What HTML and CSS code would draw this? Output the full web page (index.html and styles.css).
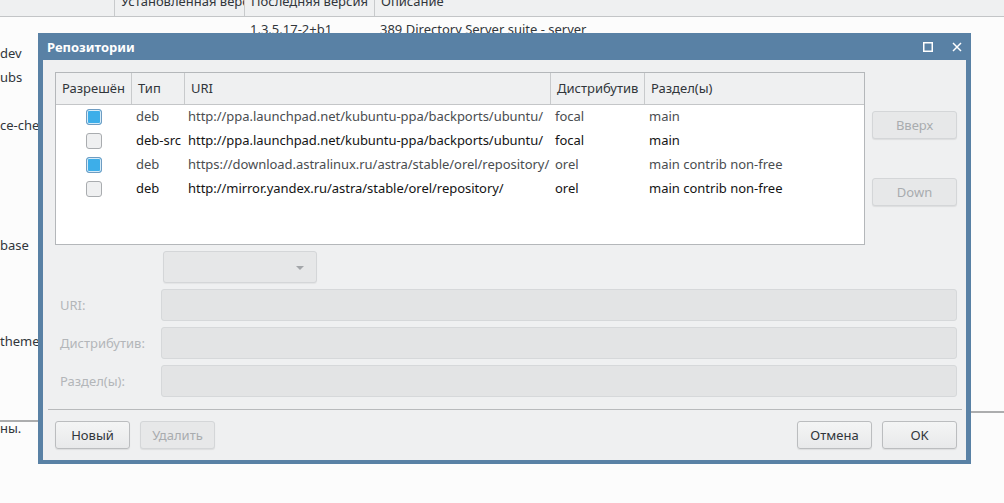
FILE: index.html
```html
<!DOCTYPE html>
<html lang="ru">
<head>
  <meta charset="UTF-8" />
  <meta name="viewport" content="width=device-width, initial-scale=1.0" />
  <title>Репозитории</title>
  <link rel="stylesheet" href="styles.css">
</head>
<body>
  <!-- окно менеджера пакетов под диалогом -->
  <div class="app">
    <div class="pkg-head">
      <div class="col col-name"></div>
      <div class="col col-inst"><span>Установленная версия</span></div>
      <div class="col col-last"><span>Последняя версия</span></div>
      <div class="col col-desc"><span>Описание</span></div>
    </div>
    <div class="pkg-list">
      <div class="pkg-row"><div class="col col-name"></div><div class="col col-inst"></div><div class="col col-last">1.3.5.17-2+b1</div><div class="col col-desc">389 Directory Server suite - server</div></div>
      <div class="pkg-row"><div class="col col-name">dev</div></div>
      <div class="pkg-row"><div class="col col-name">ubs</div></div>
      <div class="pkg-row"></div>
      <div class="pkg-row"><div class="col col-name">ce-check</div></div>
      <div class="pkg-row"></div>
      <div class="pkg-row"></div>
      <div class="pkg-row"></div>
      <div class="pkg-row"></div>
      <div class="pkg-row"><div class="col col-name">base</div></div>
      <div class="pkg-row"></div>
      <div class="pkg-row"></div>
      <div class="pkg-row"></div>
      <div class="pkg-row"><div class="col col-name">theme</div></div>
      <div class="pkg-row"></div>
      <div class="pkg-row"></div>
    </div>
    <div class="status">
      <div class="status-left">ны.</div>
      <div class="status-right"></div>
    </div>
  </div>

  <!-- диалог "Репозитории" -->
  <div class="dialog">
    <div class="titlebar">
      <span class="title">Репозитории</span>
      <div class="tb-buttons">
        <svg width="10" height="10" viewBox="0 0 10 10"><rect x="0.75" y="0.75" width="8.5" height="8.5" fill="none" stroke="#fff" stroke-width="1.5"/></svg>
        <svg width="10" height="10" viewBox="0 0 10 10"><path d="M1 1 L9 9 M9 1 L1 9" stroke="#fff" stroke-width="1.5" fill="none"/></svg>
      </div>
    </div>

    <div class="dialog-body">
      <div class="top">
        <div class="repo-table">
          <div class="tr th">
            <div class="cell">Разрешён</div>
            <div class="cell">Тип</div>
            <div class="cell">URI</div>
            <div class="cell">Дистрибутив</div>
            <div class="cell">Раздел(ы)</div>
          </div>
          <div class="tr on">
            <div class="cell check"><span class="cb checked"></span></div>
            <div class="cell">deb</div>
            <div class="cell uri">http://ppa.launchpad.net/kubuntu-ppa/backports/ubuntu/</div>
            <div class="cell">focal</div>
            <div class="cell">main</div>
          </div>
          <div class="tr off">
            <div class="cell check"><span class="cb"></span></div>
            <div class="cell">deb-src</div>
            <div class="cell uri">http://ppa.launchpad.net/kubuntu-ppa/backports/ubuntu/</div>
            <div class="cell">focal</div>
            <div class="cell">main</div>
          </div>
          <div class="tr on">
            <div class="cell check"><span class="cb checked"></span></div>
            <div class="cell">deb</div>
            <div class="cell uri">https://download.astralinux.ru/astra/stable/orel/repository/</div>
            <div class="cell">orel</div>
            <div class="cell">main contrib non-free</div>
          </div>
          <div class="tr off">
            <div class="cell check"><span class="cb"></span></div>
            <div class="cell">deb</div>
            <div class="cell uri">http://mirror.yandex.ru/astra/stable/orel/repository/</div>
            <div class="cell">orel</div>
            <div class="cell">main contrib non-free</div>
          </div>
        </div>
        <div class="side">
          <button class="btn" disabled>Вверх</button>
          <button class="btn" disabled>Down</button>
        </div>
      </div>

      <div class="combo"><span class="arrow"></span></div>

      <div class="form">
        <label>URI:</label><div class="field"></div>
        <label>Дистрибутив:</label><div class="field"></div>
        <label>Раздел(ы):</label><div class="field"></div>
      </div>

      <div class="sep"></div>

      <div class="buttons">
        <button class="btn">Новый</button>
        <button class="btn" disabled>Удалить</button>
        <span class="spacer"></span>
        <button class="btn">Отмена</button>
        <button class="btn">OK</button>
      </div>
    </div>
  </div>
</body>
</html>
```

FILE: styles.css
```css
* {
  box-sizing: border-box;
}

body {
  margin: 0;
  width: 1004px;
  height: 503px;
  overflow: hidden;
  background: #fcfcfc;
  font-family: "Noto Sans", "Open Sans", sans-serif;
  font-size: 13px;
  color: #31363b;
  position: relative;
}

/* ---------- фон: список пакетов ---------- */

.pkg-head {
  display: flex;
  height: 17px;
  background: #eff0f1;
  border-bottom: 1px solid #c3c5c7;
  overflow: hidden;
}

.pkg-head .col {
  border-right: 1px solid #c8cacc;
  padding-left: 6px;
  line-height: 16px;
  white-space: nowrap;
  overflow: hidden;
}

.pkg-head .col span {
  display: block;
  margin-top: -7px;
}

.col-name { width: 115px; }
.col-inst { width: 130px; }
.col-last { width: 130px; }
.col-desc { flex: 1; border-right: none !important; }

.pkg-row {
  display: flex;
  height: 24px;
  line-height: 24px;
  white-space: nowrap;
}

.pkg-row .col {
  overflow: hidden;
}

.pkg-row .col-last,
.pkg-row .col-desc {
  padding-left: 5px;
}

.status {
  display: flex;
  align-items: flex-start;
}

.status-left {
  width: 38px;
  margin-top: 19px;
  border-top: 2px solid #acadae;
  line-height: 12px;
  white-space: nowrap;
}

.status-right {
  flex: 1;
  margin-top: 10px;
  border-top: 2px solid #acadae;
}

/* ---------- диалог ---------- */

.dialog {
  position: absolute;
  left: 38px;
  top: 33px;
  width: 933px;
  height: 431px;
  background: #5981a5;
  display: flex;
  flex-direction: column;
}

.titlebar {
  height: 27px;
  display: flex;
  align-items: center;
  padding: 0 9px;
  color: #fff;
}

.title {
  font-weight: bold;
  font-size: 13px;
}

.tb-buttons {
  margin-left: auto;
  display: flex;
  gap: 19px;
  padding-top: 1px;
}

.dialog-body {
  flex: 1;
  margin: 0 5px 4px 5px;
  background: #eff0f1;
  padding: 12px 9px 11px 12px;
  display: flex;
  flex-direction: column;
}

.top {
  display: flex;
  gap: 7px;
}

.repo-table {
  width: 810px;
  height: 173px;
  background: #fff;
  border: 1px solid #b4b7ba;
}

.tr {
  display: grid;
  grid-template-columns: 76px 53px 366px 94px 1fr;
  height: 24px;
  line-height: 23px;
  white-space: nowrap;
}

.tr .cell {
  padding-left: 4px;
  overflow: hidden;
}

.tr .cell.uri {
  padding-left: 3px;
  letter-spacing: -0.04px;
}

.th {
  height: 32px;
  line-height: 31px;
  background: #eff0f1;
  border-bottom: 1px solid #c4c6c8;
  color: #31363b;
}

.th .cell {
  border-right: 1px solid #c8cacc;
  padding-left: 6px;
}

.th .cell:last-child {
  border-right: none;
}

.tr.on { color: #4a4d50; }
.tr.off { color: #141414; }

.tr .cell.check {
  padding-left: 30px;
  display: flex;
  align-items: center;
}

.cb {
  width: 16px;
  height: 16px;
  border-radius: 3px;
  border: 1px solid #a9acaf;
  background: #eff0f1;
}

.cb.checked {
  border-color: #6e9cc2;
  background: #3daee9;
  box-shadow: inset 0 0 0 1px #d5ebf8;
}

.side {
  width: 85px;
  padding-top: 39px;
  display: flex;
  flex-direction: column;
  gap: 39px;
}

.btn {
  font-family: inherit;
  font-size: 13px;
  color: #31363b;
  height: 28px;
  width: 75px;
  border: 1px solid #bbbdbf;
  border-radius: 3px;
  background: linear-gradient(#f4f5f5, #e8e9ea);
  box-shadow: 0 1px 1px rgba(0, 0, 0, 0.08);
  padding: 0;
}

.side .btn {
  width: 85px;
}

.btn:disabled {
  color: #a9acaf;
  border-color: #d4d6d8;
  background: #e7e8e9;
}

.combo {
  margin: 6px 0 0 108px;
  width: 154px;
  height: 32px;
  border: 1px solid #d4d6d8;
  border-radius: 3px;
  background: #e6e7e8;
  box-shadow: 0 1px 1px rgba(0, 0, 0, 0.05);
  display: flex;
  align-items: center;
  justify-content: flex-end;
  padding-right: 12px;
}

.arrow {
  width: 0;
  height: 0;
  border-left: 4px solid transparent;
  border-right: 4px solid transparent;
  border-top: 4px solid #a3a6a9;
  margin-top: 1px;
}

.form {
  margin-top: 6px;
  display: grid;
  grid-template-columns: 106px 1fr;
  row-gap: 6px;
  align-items: center;
}

.form label {
  padding-left: 5px;
  color: #b3b6b9;
}

.field {
  height: 32px;
  border: 1px solid #d6d8da;
  border-radius: 3px;
  background: #e3e4e5;
}

.sep {
  margin: 12px -5px 0 -7px;
  border-top: 1px solid #b8babc;
}

.buttons {
  margin-top: 11px;
  display: flex;
  gap: 10px;
}

.spacer {
  flex: 1;
}
```
